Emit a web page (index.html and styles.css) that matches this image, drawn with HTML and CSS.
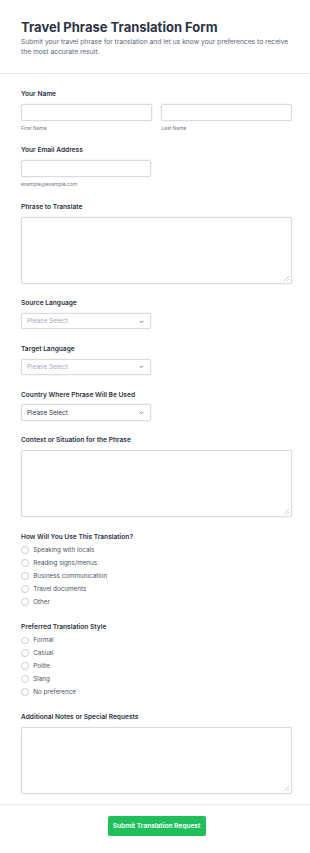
FILE: index.html
```html
<!DOCTYPE html>
<html lang="en">
<head>
<meta charset="utf-8">
<title>Travel Phrase Translation Form</title>
<link rel="stylesheet" href="styles.css">
</head>
<body>
<div class="page">
  <header class="head">
    <h1 class="title">Travel Phrase Translation Form</h1>
    <p class="subtitle">Submit your travel phrase for translation and let us know your preferences to receive the most accurate result.</p>
  </header>
  <form class="form">
    <div class="field sub">
      <div class="label">Your Name</div>
      <div class="name-row">
        <div class="name-col">
          <input class="input" type="text">
          <div class="sublabel">First Name</div>
        </div>
        <div class="name-col">
          <input class="input" type="text">
          <div class="sublabel">Last Name</div>
        </div>
      </div>
    </div>
    <div class="field sub">
      <div class="label">Your Email Address</div>
      <input class="input half" type="email">
      <div class="sublabel">example@example.com</div>
    </div>
    <div class="field">
      <div class="label">Phrase to Translate</div>
      <textarea class="area"></textarea>
    </div>
    <div class="field">
      <div class="label">Source Language</div>
      <div class="select"><span class="ph">Please Select</span><svg class="chev" viewBox="0 0 8 5" width="5" height="3.5"><path d="M1 1l3 3 3-3" fill="none" stroke="#6b7280" stroke-width="1.4"/></svg></div>
    </div>
    <div class="field">
      <div class="label">Target Language</div>
      <div class="select"><span class="ph">Please Select</span><svg class="chev" viewBox="0 0 8 5" width="5" height="3.5"><path d="M1 1l3 3 3-3" fill="none" stroke="#6b7280" stroke-width="1.4"/></svg></div>
    </div>
    <div class="field">
      <div class="label">Country Where Phrase Will Be Used</div>
      <div class="select"><span class="val">Please Select</span><svg class="chev" viewBox="0 0 8 5" width="5" height="3.5"><path d="M1 1l3 3 3-3" fill="none" stroke="#6b7280" stroke-width="1.4"/></svg></div>
    </div>
    <div class="field">
      <div class="label">Context or Situation for the Phrase</div>
      <textarea class="area"></textarea>
    </div>
    <div class="field radios">
      <div class="label">How Will You Use This Translation?</div>
      <ul class="opts">
        <li class="opt"><span class="dot"></span>Speaking with locals</li>
        <li class="opt"><span class="dot"></span>Reading signs/menus</li>
        <li class="opt"><span class="dot"></span>Business communication</li>
        <li class="opt"><span class="dot"></span>Travel documents</li>
        <li class="opt"><span class="dot"></span>Other</li>
      </ul>
    </div>
    <div class="field radios">
      <div class="label">Preferred Translation Style</div>
      <ul class="opts">
        <li class="opt"><span class="dot"></span>Formal</li>
        <li class="opt"><span class="dot"></span>Casual</li>
        <li class="opt"><span class="dot"></span>Polite</li>
        <li class="opt"><span class="dot"></span>Slang</li>
        <li class="opt"><span class="dot"></span>No preference</li>
      </ul>
    </div>
    <div class="field last">
      <div class="label">Additional Notes or Special Requests</div>
      <textarea class="area"></textarea>
    </div>
  </form>
  <div class="actions">
    <button class="submit" type="button">Submit Translation Request</button>
  </div>
</div>
</body>
</html>
```
FILE: styles.css
```css
* { box-sizing: border-box; }
html, body { margin: 0; padding: 0; background: #fff; }
body { font-family: Inter, "Noto Sans", sans-serif; color: #2c3345; }

.head {
  padding: 17px 18px 16px 21px;
  border-bottom: 1px solid #e6e8ee;
}
.title {
  margin: 0;
  font-size: 13px;
  line-height: 20px;
  font-weight: 700;
  color: #2c3345;
}
.subtitle {
  margin: 0;
  font-size: 6.7px;
  line-height: 10px;
  color: #57647e;
}

.form {
  padding: 15px 18px 10px 21px;
  border-bottom: 1px solid #e6e8ee;
}
.field { margin-bottom: 14.5px; }
.field.sub { margin-bottom: 13.3px; }
.field.radios { margin-bottom: 13.8px; }
.field.last { margin-bottom: 0; }

.label {
  font-size: 6.6px;
  line-height: 10px;
  font-weight: 600;
  color: #2c3345;
  margin-bottom: 4.8px;
}
.radios .label { margin-bottom: 2px; }

.name-row {
  display: grid;
  grid-template-columns: 1fr 1fr;
  column-gap: 9.5px;
}
.input {
  display: block;
  width: 100%;
  height: 16.8px;
  border: 1px solid #d9dce4;
  border-radius: 2px;
  background: #fff;
  padding: 0 4px;
  font: inherit;
  outline: none;
  box-shadow: 0 0 0 0.5px #eef0f4;
}
.input.half { width: 130px; }
.sublabel {
  margin-top: 3.5px;
  font-size: 5px;
  line-height: 8px;
  color: #6f768a;
}

.area {
  display: block;
  width: 100%;
  height: 67.3px;
  border: 1px solid #d9dce4;
  border-radius: 2px;
  background-color: #fff;
  background-image:
    linear-gradient(135deg, transparent 46%, #c9cdd6 46%, #c9cdd6 56%, transparent 56%, transparent 72%, #c9cdd6 72%, #c9cdd6 82%, transparent 82%);
  background-size: 5px 5px;
  background-position: right 2px bottom 2px;
  background-repeat: no-repeat;
  padding: 4px;
  font: inherit;
  outline: none;
  resize: none;
  box-shadow: 0 0 0 0.5px #eef0f4;
}

.select {
  width: 130px;
  height: 16.3px;
  border: 1px solid #d9dce4;
  border-radius: 2px;
  background: #fff;
  padding: 0 6px 0 5px;
  display: flex;
  align-items: center;
  justify-content: space-between;
  font-size: 6.4px;
  box-shadow: 0 0 0 0.5px #eef0f4;
}
.ph { color: #a3a9b8; }
.val { color: #2c3345; }
.chev { display: block; }

.opts { list-style: none; margin: 0; padding: 0; }
.opt {
  height: 12.9px;
  display: flex;
  align-items: center;
  gap: 4.5px;
  font-size: 6.3px;
  color: #4a5468;
}
.dot {
  width: 7.7px;
  height: 7.7px;
  border: 1px solid #c8ccd6;
  border-radius: 50%;
  background: #fff;
  flex: none;
}

.actions {
  display: flex;
  justify-content: center;
  padding: 11px 18px 16px 21px;
}
.submit {
  width: 98px;
  height: 20px;
  border: none;
  border-radius: 2px;
  background: #1fbf5c;
  color: #fff;
  font-family: Inter, "Noto Sans", sans-serif;
  font-size: 6.6px;
  font-weight: 600;
  padding: 0;
}
```
